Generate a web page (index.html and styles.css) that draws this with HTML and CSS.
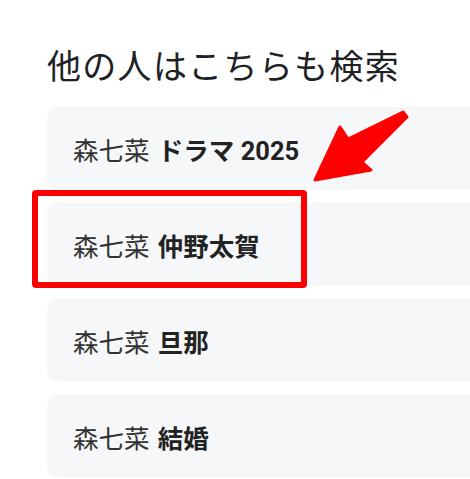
FILE: index.html
```html
<!DOCTYPE html>
<html lang="ja">
<head>
<meta charset="utf-8">
<link rel="stylesheet" href="styles.css">
</head>
<body>
<div class="page">
  <h2 class="title">他の人はこちらも検索</h2>
  <ul class="list">
    <li class="card">森七菜 <b>ドラマ 2025</b></li>
    <li class="card">森七菜 <b>仲野太賀</b></li>
    <li class="card">森七菜 <b>旦那</b></li>
    <li class="card">森七菜 <b>結婚</b></li>
  </ul>
  <div class="highlight"></div>
  <svg class="arrow" width="470" height="479" viewBox="0 0 470 479">
    <polygon points="403,112 407,117 362,162 371,170 315,180 340,127 348,139" fill="#ff0000" stroke="#ff0000" stroke-width="3" stroke-linejoin="round"/>
  </svg>
</div>
</body>
</html>
```
FILE: styles.css
```css
html, body {
  margin: 0;
  padding: 0;
  background: #ffffff;
  overflow: hidden;
}
.page {
  position: relative;
  width: 470px;
  height: 479px;
  padding: 46px 0 0 47px;
  box-sizing: border-box;
  font-family: "Roboto", "Noto Sans CJK JP", sans-serif;
  color: #202124;
  overflow: hidden;
}
.title {
  margin: 0;
  font-size: 34px;
  font-weight: 400;
  line-height: 42px;
  letter-spacing: 1.3px;
  color: #202124;
}
.list {
  list-style: none;
  margin: 19px 0 0 0;
  padding: 0;
  display: flex;
  flex-direction: column;
  gap: 14px;
}
.card {
  height: 82px;
  box-sizing: border-box;
  background: #f6f7f9;
  border-radius: 10px 0 0 10px;
  padding: 0 0 0 26px;
  display: flex;
  align-items: center;
  font-size: 25.5px;
  color: #333;
  white-space: pre;
}
.card b {
  font-weight: 700;
  color: #222;
  margin-left: 2px;
}
.highlight {
  position: absolute;
  left: 32px;
  top: 190px;
  width: 275px;
  height: 98px;
  box-sizing: border-box;
  border: 6px solid #ff0000;
  border-radius: 4px;
}
.arrow {
  position: absolute;
  left: 0;
  top: 0;
}
```
